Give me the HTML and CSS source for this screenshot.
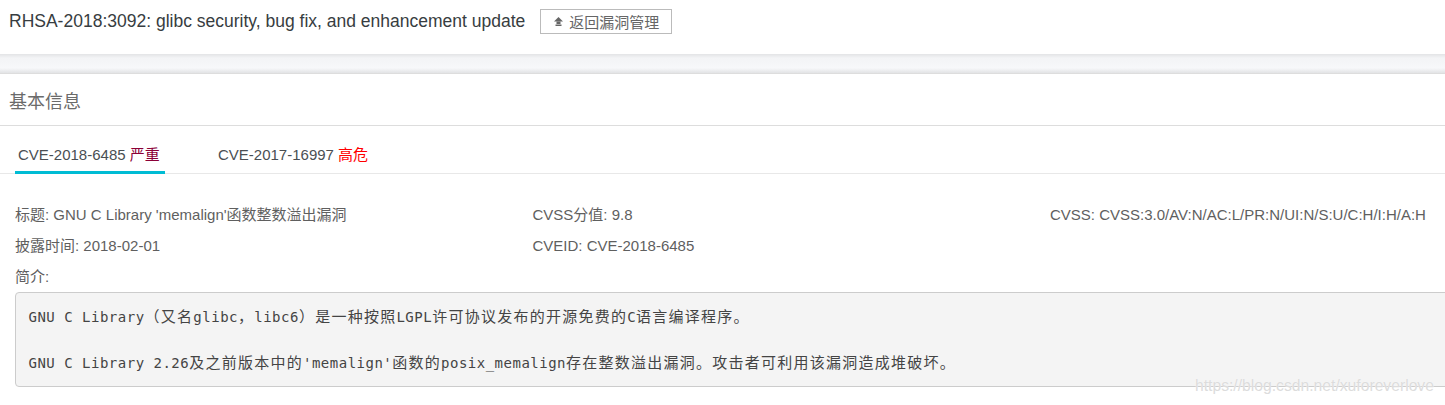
FILE: index.html
```html
<!DOCTYPE html>
<html lang="zh-CN">
  <head>
    <meta charset="UTF-8" />
    <title>RHSA-2018:3092</title>
    <link rel="stylesheet" href="styles.css">
  </head>
  <body>
    <header class="top-bar">
      <h1 class="top-title">RHSA-2018:3092: glibc security, bug fix, and enhancement update</h1>
      <a class="back-btn" href="#">
        <svg class="back-icon" viewBox="0 0 11 11" width="11" height="11">
          <path d="M5.5 1 L10 5.5 H1 Z" />
          <rect x="3.5" y="5.5" width="4" height="2.5" />
          <rect x="2.5" y="8.5" width="6" height="1.5" />
        </svg>
        返回漏洞管理
      </a>
    </header>
    <div class="band"></div>
    <section class="panel">
      <h2 class="panel-title">基本信息</h2>
      <nav class="tabs">
        <a class="tab active" href="#">CVE-2018-6485 <span class="critical">严重</span></a>
        <a class="tab" href="#">CVE-2017-16997 <span class="high">高危</span></a>
      </nav>
      <div class="info-grid">
        <div>标题: GNU C Library 'memalign'函数整数溢出漏洞</div>
        <div>CVSS分值: 9.8</div>
        <div>CVSS: CVSS:3.0/AV:N/AC:L/PR:N/UI:N/S:U/C:H/I:H/A:H</div>
        <div>披露时间: 2018-02-01</div>
        <div>CVEID: CVE-2018-6485</div>
      </div>
      <div class="intro-label">简介:</div>
      <pre class="intro-box">GNU C Library<span class="zh">（又名</span>glibc<span class="zh">，</span>libc6<span class="zh">）是一种按照</span>LGPL<span class="zh">许可协议发布的开源免费的</span>C<span class="zh">语言编译程序。</span>

GNU C Library 2.26<span class="zh">及之前版本中的</span>'memalign'<span class="zh">函数的</span>posix_memalign<span class="zh">存在整数溢出漏洞。攻击者可利用该漏洞造成堆破坏。</span></pre>
    </section>
    <div class="watermark">https://blog.csdn.net/xuforeverlove</div>
  </body>
</html>
```

FILE: styles.css
```css
* {
  margin: 0;
  box-sizing: border-box;
}

html,
body {
  height: 405px;
  overflow: hidden;
}

body {
  background: #fff;
  color: #5f5f5f;
  font-family: "Liberation Sans", "Noto Sans CJK SC", sans-serif;
  font-size: 15px;
  position: relative;
}

a {
  color: inherit;
  text-decoration: none;
}

.top-bar {
  height: 54px;
  padding: 9px 9px 0;
  display: flex;
  align-items: flex-start;
  background: #fff;
}

.top-title {
  font-size: 17.5px;
  font-weight: normal;
  color: #373d41;
  line-height: 25px;
}

.back-btn {
  margin-left: 15px;
  height: 25px;
  width: 132px;
  border: 1px solid #bbb;
  display: flex;
  align-items: center;
  justify-content: center;
  gap: 5px;
  color: #666;
  font-size: 15px;
}

.back-icon {
  fill: #666;
}

.band {
  height: 19px;
  background: linear-gradient(#e3e4e6 0, #f3f4f6 4px, #f7f8fa 14px, #e2e3e5 19px);
}

.panel {
  border-top: 1px solid #ddd;
  background: #fff;
}

.panel-title {
  height: 52px;
  line-height: 57px;
  padding-left: 9px;
  font-size: 18px;
  font-weight: normal;
  color: #6b6b6b;
  border-bottom: 1px solid #ddd;
}

.tabs {
  display: flex;
  height: 48px;
  padding-left: 15px;
  border-bottom: 1px solid #e8e8e8;
}

.tab {
  padding: 20px 3px 0;
  width: 150px;
  color: #4a4f53;
  line-height: 18px;
  margin-right: 50px;
  white-space: nowrap;
}

.tab.active {
  border-bottom: 3px solid #00bcd4;
  height: 48px;
}

.critical {
  color: #8b0037;
}

.high {
  color: #f00;
}

.info-grid {
  display: grid;
  grid-template-columns: repeat(3, 517.5px);
  row-gap: 11px;
  padding: 31px 0 0 15px;
  line-height: 20px;
  white-space: nowrap;
}

.intro-label {
  padding: 11px 0 0 15px;
  line-height: 20px;
}

.intro-box {
  margin: 5px 0 0 15px;
  width: 1500px;
  height: 95px;
  padding: 13px 12.5px;
  background: #f4f4f4;
  border: 1px solid #ccc;
  border-radius: 4px;
  font-family: "DejaVu Sans Mono", "Noto Sans CJK SC", monospace;
  font-size: 14px;
  line-height: 23px;
  letter-spacing: 0.5px;
  color: #444;
}

.zh {
  font-family: "Noto Sans CJK SC", sans-serif;
  font-size: 15px;
  line-height: 0;
  letter-spacing: 1.25px;
}

.watermark {
  position: absolute;
  left: 1195px;
  top: 377px;
  font-size: 15.7px;
  color: #dcdcdc;
  text-shadow: 0 0 1px #fff;
  white-space: nowrap;
}
```
